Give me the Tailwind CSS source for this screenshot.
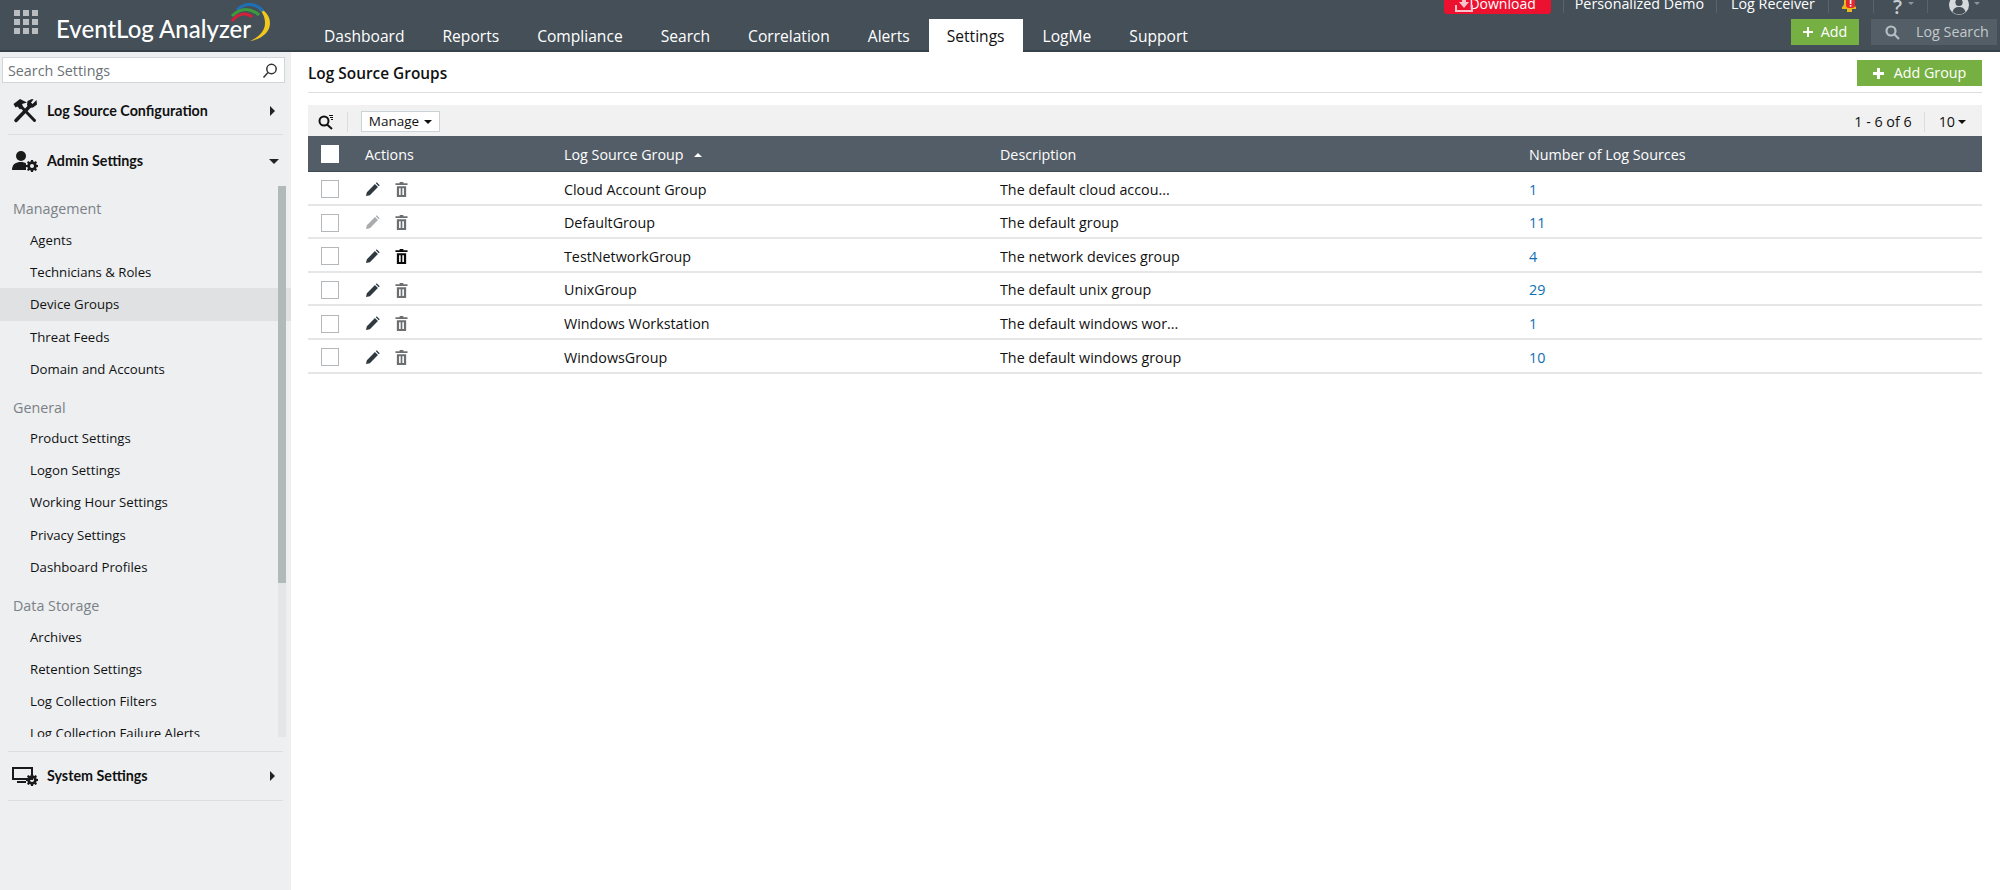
<!DOCTYPE html>
<html lang="en">

<head>
    <meta charset="UTF-8">
    <title>Log Source Groups</title>
    <script src="https://cdn.jsdelivr.net/npm/@tailwindcss/browser@4"></script>
</head>

<body class="h-[890px] overflow-hidden bg-white font-['Open_Sans',sans-serif] text-[14.3px] text-[#111]">
    <svg class="hidden">
        <symbol id="pencil" viewBox="0 0 16 16">
            <path fill="currentColor" d="M1 15l1-4.200L10.600 2.200l3.200 3.200L5.200 14zM11.500 1.300l1-1 3.200 3.200-1 1z" />
        </symbol>
        <symbol id="trash" viewBox="0 0 14 16">
            <path fill="currentColor" d="M5 0h4v1.400h4.500v1.800H.5V1.400H5zM2 4.400h10V16H2zm2.400 2.200V14h1.700V6.600zm3.500 0V14h1.700V6.600z" fill-rule="evenodd" />
        </symbol>
        <symbol id="gear" viewBox="0 0 12 12">
            <path fill="currentColor" fill-rule="evenodd" d="M5 0h2l.3 1.600 1 .4L9.700 1.100l1.300 1.300-.9 1.400.4 1L12 5v2l-1.500.3-.4 1 .9 1.400-1.300 1.300-1.400-.9-1 .4L7 12H5l-.3-1.500-1-.4-1.400.9-1.300-1.300.9-1.400-.4-1L0 7V5l1.500-.3.4-1-.9-1.400L2.300 1l1.400.9 1-.4zM6 4a2 2 0 1 0 0 4 2 2 0 0 0 0-4z" />
        </symbol>
    </svg>

    <header class="h-[52px] bg-[#444f58] shadow-[inset_0_-2px_0_#37414a] flex relative overflow-hidden">
        <div class="w-[305px] shrink-0 flex items-start">
            <div class="ml-[14px] mt-[10px] grid grid-cols-3 gap-[3px]">
                <span class="w-[6px] h-[6px] bg-[#b9bdc0]"></span><span class="w-[6px] h-[6px] bg-[#b9bdc0]"></span><span class="w-[6px] h-[6px] bg-[#b9bdc0]"></span>
                <span class="w-[6px] h-[6px] bg-[#b9bdc0]"></span><span class="w-[6px] h-[6px] bg-[#b9bdc0]"></span><span class="w-[6px] h-[6px] bg-[#b9bdc0]"></span>
                <span class="w-[6px] h-[6px] bg-[#b9bdc0]"></span><span class="w-[6px] h-[6px] bg-[#b9bdc0]"></span><span class="w-[6px] h-[6px] bg-[#b9bdc0]"></span>
            </div>
            <div class="relative ml-[18px] mt-[13px] font-['Lato',sans-serif] font-medium text-[24px] leading-[32px] text-white whitespace-nowrap">
                EventLog Analyzer
                <svg class="absolute left-[174px] top-[-11px] w-[44px] h-[44px]" viewBox="230 2 44 44" fill="none">
                    <path d="M253 5C264 9 270 15 270 23C270 32 262 39 250 41C259 37 265 31 265 23C265 15 261 9 253 5Z" fill="#f2c81e" />
                    <path d="M237 10C245 2 256 3 263 11" stroke="#1f6fb5" stroke-width="3" />
                    <path d="M232 16C241 7 251 8 259 15" stroke="#3d9a3f" stroke-width="3" />
                    <path d="M232 21C238 13 247 12 252 17" stroke="#d3213c" stroke-width="3" />
                </svg>
            </div>
        </div>
        <nav class="flex items-end text-[15.6px] text-white">
            <a class="px-[19px] h-[33px] leading-[34px]">Dashboard</a>
            <a class="px-[19px] h-[33px] leading-[34px]">Reports</a>
            <a class="px-[19px] h-[33px] leading-[34px]">Compliance</a>
            <a class="px-[19px] h-[33px] leading-[34px]">Search</a>
            <a class="px-[19px] h-[33px] leading-[34px]">Correlation</a>
            <a class="px-[19px] h-[33px] leading-[34px]">Alerts</a>
            <a class="px-[18px] h-[33px] leading-[34px] bg-white text-[#111]">Settings</a>
            <a class="px-[19px] h-[33px] leading-[34px] ml-[1px]">LogMe</a>
            <a class="px-[19px] h-[33px] leading-[34px]">Support</a>
        </nav>
        <div class="ml-auto flex flex-col items-end text-white">
            <div class="-mt-[7px] h-[21px] flex items-center text-[14.3px] pr-[20px]">
                <a class="relative w-[107px] h-[21px] bg-[#ed1130] rounded-[3px] flex items-center justify-end pr-[15px] text-[14px]">
                    <svg class="absolute left-[11px] top-[2px] w-[18px] h-[17px]" viewBox="0 0 18 17">
                        <path fill="none" stroke="#f7c3ca" stroke-width="2" d="M1 10v6h16v-6" />
                        <path fill="#f7c3ca" d="M7 0h4v7h3l-5 6-5-6h3z" />
                    </svg>
                    Download
                </a>
                <span class="w-px h-[18px] bg-[#59636b] ml-[12px]"></span>
                <a class="ml-[11px]">Personalized Demo</a>
                <span class="w-px h-[18px] bg-[#59636b] ml-[12px]"></span>
                <a class="ml-[14px]">Log Receiver</a>
                <span class="w-px h-[18px] bg-[#59636b] ml-[13px]"></span>
                <svg class="ml-[11px] w-[19px] h-[21px]" viewBox="0 0 19 21">
                    <path d="M2 14c2-1 2-3 2-6s2-6 5-6 5 3 5 6 0 5 2 6v2H2z" fill="#eab71e" />
                    <rect x="7" y="16" width="5" height="3" fill="#eab71e" />
                    <rect x="6" y="4" width="9" height="11" rx="3" fill="#e8262f" />
                    <rect x="9.800" y="6" width="1.600" height="5" fill="#fff" />
                    <rect x="9.800" y="12" width="1.600" height="1.600" fill="#fff" />
                </svg>
                <span class="w-px h-[18px] bg-[#59636b] ml-[14px]"></span>
                <span class="ml-[19px] mt-[5px] text-[20px] leading-[21px] font-semibold text-[#c6cbcf]">?</span>
                <span class="ml-[6px] border-x-[3px] border-t-[3px] border-x-transparent border-t-[#8d959b]"></span>
                <span class="w-px h-[18px] bg-[#59636b] ml-[13px]"></span>
                <svg class="ml-[21px] mt-[3px] w-[20px] h-[20px]" viewBox="0 0 20 20">
                    <circle cx="10" cy="10" r="10" fill="#d7dadc" />
                    <circle cx="10" cy="7.500" r="3.600" fill="#444f58" />
                    <path d="M3.500 17c1-4 3.500-5 6.500-5s5.500 1 6.500 5a10 10 0 0 1-13 0z" fill="#444f58" />
                </svg>
                <span class="ml-[5px] border-x-[3px] border-t-[3px] border-x-transparent border-t-[#8d959b]"></span>
            </div>
            <div class="mt-[5px] flex pr-[3px]">
                <a class="w-[68px] h-[26px] bg-[#76b043] flex items-center justify-center gap-[8px]">
                    <svg class="w-[10px] h-[10px]" viewBox="0 0 10 10"><path fill="#fff" d="M4 0h2v4h4v2H6v4H4V6H0V4h4z" /></svg>
                    Add
                </a>
                <div class="ml-[12px] w-[126px] h-[26px] bg-[#535e67] flex items-center text-[#c4c9cc]">
                    <svg class="ml-[14px] w-[15px] h-[15px]" viewBox="0 0 15 15" fill="none" stroke="#b8bec2" stroke-width="2.200"><circle cx="6" cy="6" r="4.500" /><path d="M9.500 9.500L14 14" /></svg>
                    <span class="ml-[16px] whitespace-nowrap">Log Search</span>
                </div>
            </div>
        </div>
    </header>

    <div class="flex h-[838px]">
        <aside class="w-[291px] shrink-0 bg-[#edeff1] flex flex-col">
            <div class="mt-[5px] ml-[2px] w-[283px] h-[26px] pt-[1px] bg-white border border-[#d3d6d8] flex items-center px-[5px] text-[14.300px] text-[#6b7177]">
                Search Settings
                <svg class="ml-auto mr-[1px] w-[16px] h-[16px]" viewBox="0 0 16 16" fill="none" stroke="#333" stroke-width="1.500"><circle cx="9.500" cy="6" r="4.700" /><path d="M6 9.500L1.500 14.500" /></svg>
            </div>
            <div class="w-[275px] ml-[8px] mt-[2px] h-[50px] pt-[2px] border-b border-[#dcdfe1] flex items-center font-['Lato',sans-serif] font-bold text-[14.300px]">
                <svg class="w-[26px] h-[26px] ml-[4px]" viewBox="0 0 26 26" fill="none" stroke="#1a1a1a">
                    <path stroke-width="3.500" stroke-linecap="round" d="M4 22.500L17 9" />
                    <path stroke-width="3" stroke-linecap="round" d="M22.500 22.500L10 9.500" />
                    <path fill="#1a1a1a" stroke="none" d="M1.500 6L8 1l7 3.500-5 1.500 1 2.500-3 3-2.500-3-2 1z" />
                    <path fill="#1a1a1a" stroke="none" d="M24.500 2l.5 4.500-4 3-4 .5-2-3 .5-4L20 1l1.500.5-2.500 3 1.500 1.500z" />
                </svg>
                <span class="ml-[9px]">Log Source Configuration</span>
                <span class="ml-auto mr-[8px] border-y-[5px] border-l-[5px] border-y-transparent border-l-[#222]"></span>
            </div>
            <div class="w-[275px] ml-[8px] h-[50px] pt-[2px] flex items-center font-['Lato',sans-serif] font-bold text-[14.300px]">
                <svg class="w-[26px] h-[22px] ml-[4px]" viewBox="0 0 26 22">
                    <circle cx="9" cy="6" r="5" fill="#1a1a1a" />
                    <path d="M0 20c0-6 4-8 9-8 2 0 4 .5 5 1.500V20z" fill="#1a1a1a" />
                    <use href="#gear" x="14" y="10" width="12" height="12" class="text-[#1a1a1a]" />
                </svg>
                <span class="ml-[9px]">Admin Settings</span>
                <span class="ml-auto mr-[4px] border-x-[5px] border-t-[5px] border-x-transparent border-t-[#222]"></span>
            </div>
            <div class="relative h-[551px] overflow-hidden mt-[1px]">
                <div class="pt-[7px]">
                    <p class="pl-[13px] h-[31px] leading-[32px] text-[14.300px] text-[#7b8186]">Management</p>
                    <p class="pl-[30px] h-[32.200px] leading-[32px] text-[13.200px]">Agents</p>
                    <p class="pl-[30px] h-[32.200px] leading-[32px] text-[13.200px]">Technicians &amp; Roles</p>
                    <p class="pl-[30px] h-[32.200px] leading-[32px] text-[13.200px] bg-[#e0e1e3]">Device Groups</p>
                    <p class="pl-[30px] h-[32.200px] leading-[32px] text-[13.200px]">Threat Feeds</p>
                    <p class="pl-[30px] h-[32.200px] leading-[32px] text-[13.200px]">Domain and Accounts</p>
                    <p class="pl-[13px] h-[37px] leading-[45px] text-[14.300px] text-[#7b8186]">General</p>
                    <p class="pl-[30px] h-[32.200px] leading-[32px] text-[13.200px]">Product Settings</p>
                    <p class="pl-[30px] h-[32.200px] leading-[32px] text-[13.200px]">Logon Settings</p>
                    <p class="pl-[30px] h-[32.200px] leading-[32px] text-[13.200px]">Working Hour Settings</p>
                    <p class="pl-[30px] h-[32.200px] leading-[32px] text-[13.200px]">Privacy Settings</p>
                    <p class="pl-[30px] h-[32.200px] leading-[32px] text-[13.200px]">Dashboard Profiles</p>
                    <p class="pl-[13px] h-[38px] leading-[46px] text-[14.300px] text-[#7b8186]">Data Storage</p>
                    <p class="pl-[30px] h-[32.200px] leading-[32px] text-[13.200px]">Archives</p>
                    <p class="pl-[30px] h-[32.200px] leading-[32px] text-[13.200px]">Retention Settings</p>
                    <p class="pl-[30px] h-[32.200px] leading-[32px] text-[13.200px]">Log Collection Filters</p>
                    <p class="pl-[30px] h-[32.200px] leading-[32px] text-[13.200px]">Log Collection Failure Alerts</p>
                </div>
                <div class="absolute left-[278px] top-[0] w-[8px] h-full bg-[#e3e6e7]">
                    <div class="w-full h-[397px] bg-[#b1b9ba]"></div>
                </div>
            </div>
            <div class="w-[275px] ml-[8px] mt-[14px] h-[50px] border-y border-[#dcdfe1] flex items-center font-['Lato',sans-serif] font-bold text-[14.300px]">
                <svg class="w-[26px] h-[20px] ml-[4px] text-[#1a1a1a]" viewBox="0 0 26 20">
                    <path fill="none" stroke="#1a1a1a" stroke-width="2" d="M1 2h19v11H1z" />
                    <path fill="#1a1a1a" d="M5 15h9v2H5z" />
                    <use href="#gear" x="14" y="8" width="12" height="12" />
                </svg>
                <span class="ml-[9px]">System Settings</span>
                <span class="ml-auto mr-[8px] border-y-[5px] border-l-[5px] border-y-transparent border-l-[#222]"></span>
            </div>
        </aside>

        <main class="flex-1 pl-[17px] pr-[18px]">
            <div class="h-[41px] border-b border-[#dcdfe1] flex items-start">
                <h1 class="mt-[9px] text-[15.400px] leading-[26px] font-semibold text-[#111]">Log Source Groups</h1>
                <a class="ml-auto mt-[8px] w-[125px] h-[26px] bg-[#76b043] flex items-center justify-center gap-[10px] text-white">
                    <svg class="w-[11px] h-[11px]" viewBox="0 0 11 11"><path fill="#fff" d="M4 0h3v4h4v3H7v4H4V7H0V4h4z" /></svg>
                    Add Group
                </a>
            </div>
            <div class="mt-[12px] h-[31px] pt-[2px] bg-[#f1f1f1] flex items-center">
                <svg class="ml-[10px] w-[16px] h-[16px]" viewBox="0 0 16 16" fill="none" stroke="#111" stroke-width="2">
                    <circle cx="6" cy="7" r="4.500" /><path d="M9 10.500L14 15" /><path stroke-width="1" d="M11 1.500h4M12 3.500h3M13 5.500h2" />
                </svg>
                <span class="ml-[13px] w-px h-[20px] bg-[#dcdcdc]"></span>
                <a class="ml-[13px] w-[79px] h-[21px] bg-white border border-[#c9d3d8] flex items-center justify-center gap-[5px] text-[13.500px]">
                    Manage <span class="border-x-[4px] border-t-[4px] border-x-transparent border-t-[#111]"></span>
                </a>
                <span class="ml-auto">1 - 6 of 6</span>
                <span class="ml-[12px] w-px h-[20px] bg-[#dcdcdc]"></span>
                <span class="ml-[14px]">10</span>
                <span class="ml-[3px] mr-[16px] border-x-[4px] border-t-[4px] border-x-transparent border-t-[#111]"></span>
            </div>
            <div class="h-[36px] pt-[2px] bg-[#535d67] border-b border-[#3f4951] grid grid-cols-[57px_199px_436px_529px_1fr] items-center text-white">
                <span class="ml-[13px] w-[18px] h-[18px] bg-white -mt-[1px]"></span>
                <span>Actions</span>
                <span class="flex items-center">Log Source Group<span class="ml-[10px] border-x-[4px] border-b-[4px] border-x-transparent border-b-white"></span></span>
                <span>Description</span>
                <span>Number of Log Sources</span>
            </div>

            <div class="h-[33.600px] pt-[3px] border-b-2 border-[#e4e6e7] grid grid-cols-[57px_199px_436px_529px_1fr] items-center">
                <span class="ml-[13px] w-[18px] h-[18px] bg-white border border-[#b5b8ba]"></span>
                <span class="flex items-center"><svg class="w-[15px] h-[15px] text-[#2f3a40]"><use href="#pencil" /></svg><svg class="ml-[15px] w-[13px] h-[15px] text-[#6c6f71]"><use href="#trash" /></svg></span>
                <span>Cloud Account Group</span>
                <span>The default cloud accou...</span>
                <span class="text-[#0f6fb5]">1</span>
            </div>
            <div class="h-[33.600px] pt-[3px] border-b-2 border-[#e4e6e7] grid grid-cols-[57px_199px_436px_529px_1fr] items-center">
                <span class="ml-[13px] w-[18px] h-[18px] bg-white border border-[#b5b8ba]"></span>
                <span class="flex items-center"><svg class="w-[15px] h-[15px] text-[#a9acae]"><use href="#pencil" /></svg><svg class="ml-[15px] w-[13px] h-[15px] text-[#6c6f71]"><use href="#trash" /></svg></span>
                <span>DefaultGroup</span>
                <span>The default group</span>
                <span class="text-[#0f6fb5]">11</span>
            </div>
            <div class="h-[33.600px] pt-[3px] border-b-2 border-[#e4e6e7] grid grid-cols-[57px_199px_436px_529px_1fr] items-center">
                <span class="ml-[13px] w-[18px] h-[18px] bg-white border border-[#b5b8ba]"></span>
                <span class="flex items-center"><svg class="w-[15px] h-[15px] text-[#2f3a40]"><use href="#pencil" /></svg><svg class="ml-[15px] w-[13px] h-[15px] text-[#0b0b0b]"><use href="#trash" /></svg></span>
                <span>TestNetworkGroup</span>
                <span>The network devices group</span>
                <span class="text-[#0f6fb5]">4</span>
            </div>
            <div class="h-[33.600px] pt-[3px] border-b-2 border-[#e4e6e7] grid grid-cols-[57px_199px_436px_529px_1fr] items-center">
                <span class="ml-[13px] w-[18px] h-[18px] bg-white border border-[#b5b8ba]"></span>
                <span class="flex items-center"><svg class="w-[15px] h-[15px] text-[#2f3a40]"><use href="#pencil" /></svg><svg class="ml-[15px] w-[13px] h-[15px] text-[#6c6f71]"><use href="#trash" /></svg></span>
                <span>UnixGroup</span>
                <span>The default unix group</span>
                <span class="text-[#0f6fb5]">29</span>
            </div>
            <div class="h-[33.600px] pt-[3px] border-b-2 border-[#e4e6e7] grid grid-cols-[57px_199px_436px_529px_1fr] items-center">
                <span class="ml-[13px] w-[18px] h-[18px] bg-white border border-[#b5b8ba]"></span>
                <span class="flex items-center"><svg class="w-[15px] h-[15px] text-[#2f3a40]"><use href="#pencil" /></svg><svg class="ml-[15px] w-[13px] h-[15px] text-[#6c6f71]"><use href="#trash" /></svg></span>
                <span>Windows Workstation</span>
                <span>The default windows wor...</span>
                <span class="text-[#0f6fb5]">1</span>
            </div>
            <div class="h-[33.600px] pt-[3px] border-b-2 border-[#e4e6e7] grid grid-cols-[57px_199px_436px_529px_1fr] items-center">
                <span class="ml-[13px] w-[18px] h-[18px] bg-white border border-[#b5b8ba]"></span>
                <span class="flex items-center"><svg class="w-[15px] h-[15px] text-[#2f3a40]"><use href="#pencil" /></svg><svg class="ml-[15px] w-[13px] h-[15px] text-[#6c6f71]"><use href="#trash" /></svg></span>
                <span>WindowsGroup</span>
                <span>The default windows group</span>
                <span class="text-[#0f6fb5]">10</span>
            </div>
        </main>
    </div>
</body>

</html>
